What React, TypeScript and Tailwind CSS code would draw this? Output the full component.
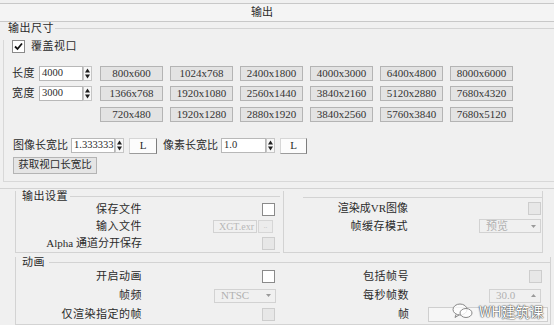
import React from 'react';

const line = 'bg-[#d3d3d3]';

const Spin = () => (
  <svg width="9" height="15" viewBox="0 0 9 15" className="shrink-0">
    <rect x="0.5" y="0.5" width="8" height="14" fill="#f7f7f7" stroke="#c6c6c6" />
    <path d="M2 6.5 L4.5 2.5 L7 6.5 Z" fill="#1e1e1e" />
    <path d="M2 8.5 L4.5 12.5 L7 8.5 Z" fill="#1e1e1e" />
  </svg>
);

const Btn = ({ children, className = '' }: { children: React.ReactNode; className?: string }) => (
  <button
    type="button"
    className={`flex h-[15px] shrink-0 items-center justify-center border border-[#b4b4b4] bg-[#e3e3e3] text-[11px] leading-none text-[#333] ${className}`}
  >
    {children}
  </button>
);

const LBtn = ({ className = '' }: { className?: string }) => (
  <button
    type="button"
    className={`flex h-[16px] shrink-0 items-center justify-center border border-[#d6d6d6] border-r-[#7d7d7d] border-b-[#9c9c9c] bg-[#fcfcfc] text-[11px] leading-none ${className}`}
  >
    L
  </button>
);

const NumBox = ({ value, w }: { value: string; w: string }) => (
  <div className="flex items-center">
    <div className={`flex h-[15px] items-center overflow-hidden whitespace-nowrap border border-[#b8b8b8] bg-white pl-[2px] text-[10.5px] leading-none ${w}`}>
      {value}
    </div>
    <Spin />
  </div>
);

const Check = ({ on, disabled }: { on?: boolean; disabled?: boolean }) => (
  <div
    className={`flex h-[13px] w-[13px] shrink-0 items-center justify-center border ${
      disabled ? 'border-[#cdcdcd] bg-[#e7e7e7]' : 'border-[#8a8a8a] bg-white'
    }`}
  >
    {on && (
      <svg width="9" height="9" viewBox="0 0 9 9">
        <path d="M1 4.5 L3.5 7 L8 1.5" fill="none" stroke="#111" strokeWidth="1.8" />
      </svg>
    )}
  </div>
);

const Arrow = ({ up }: { up?: boolean }) => (
  <svg width="5" height="3" viewBox="0 0 5 3" className="shrink-0">
    <path d={up ? 'M0 3 L2.5 0 L5 3 Z' : 'M0 0 L2.5 3 L5 0 Z'} fill="#9a9a9a" />
  </svg>
);

const Dim = ({ children, w, up }: { children: React.ReactNode; w: string; up?: boolean }) => (
  <div className={`flex h-[14px] items-center justify-between border border-[#d2d2d2] bg-[#f0f0f0] pl-[6px] pr-[4px] text-[11px] leading-none text-[#b0b0b0] ${w}`}>
    <span>{children}</span>
    <Arrow up={up} />
  </div>
);

const Row = ({ label, labelW, h, pr = 'pr-[5px]', children }: { label: string; labelW: string; h: string; pr?: string; children?: React.ReactNode }) => (
  <div className={`flex items-center ${h}`}>
    <div className={`shrink-0 whitespace-nowrap text-right ${labelW}`}>{label}</div>
    <div className={`flex flex-1 justify-end ${pr}`}>{children}</div>
  </div>
);

const sizes = [
  ['800x600', '1024x768', '2400x1800', '4000x3000', '6400x4800', '8000x6000'],
  ['1366x768', '1920x1080', '2560x1440', '3840x2160', '5120x2880', '7680x4320'],
  ['720x480', '1920x1280', '2880x1920', '3840x2560', '5760x3840', '7680x5120'],
];

export default function App() {
  return (
    <div className="relative h-[325px] w-[554px] overflow-hidden bg-[#f0f0f0] font-['Liberation_Serif','Noto_Sans_CJK_SC',serif] text-[11px] leading-none text-[#2b2b2b]">
      <div className="pt-[3px]">
        <div className="flex h-[19px] items-center justify-center border-y border-[#c8c8c8] bg-[#f4f4f4] pr-[30px]">输出</div>
      </div>

      {/* 输出尺寸 */}
      <div className="flex h-[13px] items-center pl-[8px]">
        <span className="tracking-[0.5px]">输出尺寸</span>
        <div className={`ml-[1px] h-px flex-1 ${line}`} />
      </div>
      <div className="ml-[3px] border-l border-b border-[#d8d8d8] pb-[7px]">
        <div className="mt-[5px] flex h-[13px] items-center gap-[6px] pl-[8px]">
          <Check on />
          <span className="tracking-[0.5px]">覆盖视口</span>
        </div>

        <div className="mt-[13px] flex h-[15px] items-center pl-[8px]">
          <span className="w-[27px] shrink-0 tracking-[0.5px]">长度</span>
          <NumBox value="4000" w="w-[44px]" />
          <div className="ml-[8px] flex gap-[7px]">
            {sizes[0].map((s) => <Btn key={s} className="w-[63px]">{s}</Btn>)}
          </div>
        </div>
        <div className="mt-[5px] flex h-[15px] items-center pl-[8px]">
          <span className="w-[27px] shrink-0 tracking-[0.5px]">宽度</span>
          <NumBox value="3000" w="w-[44px]" />
          <div className="ml-[8px] flex gap-[7px]">
            {sizes[1].map((s) => <Btn key={s} className="w-[63px]">{s}</Btn>)}
          </div>
        </div>
        <div className="mt-[6px] flex h-[15px] items-center gap-[7px] pl-[96px]">
          {sizes[2].map((s) => <Btn key={s} className="w-[63px]">{s}</Btn>)}
        </div>

        <div className="mt-[16px] flex h-[15px] items-center pl-[9px]">
          <span className="w-[58px] shrink-0">图像长宽比</span>
          <NumBox value="1.333333" w="w-[44px]" />
          <LBtn className="ml-[5px] w-[28px]" />
          <span className="ml-[6px] w-[58px] shrink-0">像素长宽比</span>
          <NumBox value="1.0" w="w-[45px]" />
          <LBtn className="ml-[5px] w-[27px]" />
        </div>
        <div className="mt-[4px] pl-[9px]">
          <button type="button" className="flex h-[17px] w-[84px] items-center justify-center border border-[#b4b4b4] bg-[#e5e5e5] text-[10.5px]">
            获取视口长宽比
          </button>
        </div>
      </div>

      <div className={`mt-[6px] h-px ${line}`} />

      {/* 输出设置 */}
      <div className="flex pl-[15px] pt-[2px]">
        <div className="w-[265px] border-l border-b border-[#d3d3d3]">
          <div className="flex h-[10px] items-center pl-[6px]">
            <span className="tracking-[0.5px]">输出设置</span>
            <div className={`ml-[2px] h-px flex-1 ${line}`} />
          </div>
          <Row label="保存文件" labelW="w-[126px] tracking-[0.5px]" h="h-[17px]">
            <Check />
          </Row>
          <Row label="输入文件" labelW="w-[126px] tracking-[0.5px]" h="h-[17px]" pr="pr-[7px]">
            <div className="flex h-[13px] w-[44px] items-center justify-end border border-[#d2d2d2] pr-[2px] text-[10px] text-[#b8b8b8]">XGT.exr</div>
            <div className="ml-[1px] flex h-[13px] w-[15px] items-end justify-center border border-[#d6d6d6] bg-[#ececec] pb-[2px] text-[7px] text-[#bbb]">..</div>
          </Row>
          <Row label="Alpha 通道分开保存" labelW="w-[126px]" h="h-[17px]">
            <Check disabled />
          </Row>
        </div>

        <div className="ml-[3px] flex w-[260px] flex-col border-x border-b border-[#d3d3d3]">
          <div className={`ml-[19px] mt-[6px] h-px ${line}`} />
          <div className="pt-[1px]">
            <Row label="渲染成VR图像" labelW="w-[124px]" h="h-[18px]" pr="pr-[1px]">
              <Check disabled />
            </Row>
            <Row label="帧缓存模式" labelW="w-[124px] tracking-[0.5px]" h="h-[18px]" pr="pr-[1px]">
              <Dim w="w-[62px]">预览</Dim>
            </Row>
          </div>
        </div>
      </div>

      {/* 动画 */}
      <div className="ml-[15px] mt-[4px] w-[536px] border-l border-r border-b border-[#d3d3d3]">
        <div className="flex h-[10px] items-center pl-[6px]">
          <span className="tracking-[0.5px]">动画</span>
          <div className={`ml-[4px] h-px flex-1 ${line}`} />
        </div>
        <div className="flex">
          <div className="w-[264px]">
            <Row label="开启动画" labelW="w-[126px] tracking-[0.5px]" h="h-[19px]">
              <Check />
            </Row>
            <Row label="帧频" labelW="w-[126px] tracking-[0.5px]" h="h-[19px]" pr="pr-[4px]">
              <Dim w="w-[62px]">NTSC</Dim>
            </Row>
            <Row label="仅渲染指定的帧" labelW="w-[126px] tracking-[0.5px]" h="h-[19px]">
              <Check disabled />
            </Row>
          </div>
          <div className="flex-1">
            <Row label="包括帧号" labelW="w-[129px] tracking-[0.5px]" h="h-[19px]" pr="pr-[8px]">
              <Check disabled />
            </Row>
            <Row label="每秒帧数" labelW="w-[129px] tracking-[0.5px]" h="h-[19px]" pr="pr-[9px]">
              <Dim w="w-[52px]" up>30.0</Dim>
            </Row>
            <Row label="帧" labelW="w-[129px]" h="h-[19px]" pr="pr-[2px]">
              <div className="h-[15px] w-[120px] border border-[#cfcfcf] bg-[#f6f6f6]" />
            </Row>
          </div>
        </div>
      </div>

      {/* watermark */}
      <div className="absolute left-[452px] top-[303px] flex items-center gap-[5px] font-['Noto_Sans_CJK_SC',sans-serif] text-[14px] leading-none text-white [text-shadow:0_0_1px_#444,0_0_1px_#444,0_0_2px_#666]">
        <svg width="22" height="16" viewBox="0 0 22 16">
          <g fill="none" stroke="#888" strokeWidth="1">
            <ellipse cx="8" cy="6.5" rx="7" ry="5.5" fill="#fff" fillOpacity="0.7" />
            <ellipse cx="14" cy="10" rx="6" ry="4.5" fill="#fff" fillOpacity="0.8" />
            <path d="M4 11.5 L3 14.5 L7 12" />
          </g>
        </svg>
        <span>WH建筑课</span>
      </div>
    </div>
  );
}
